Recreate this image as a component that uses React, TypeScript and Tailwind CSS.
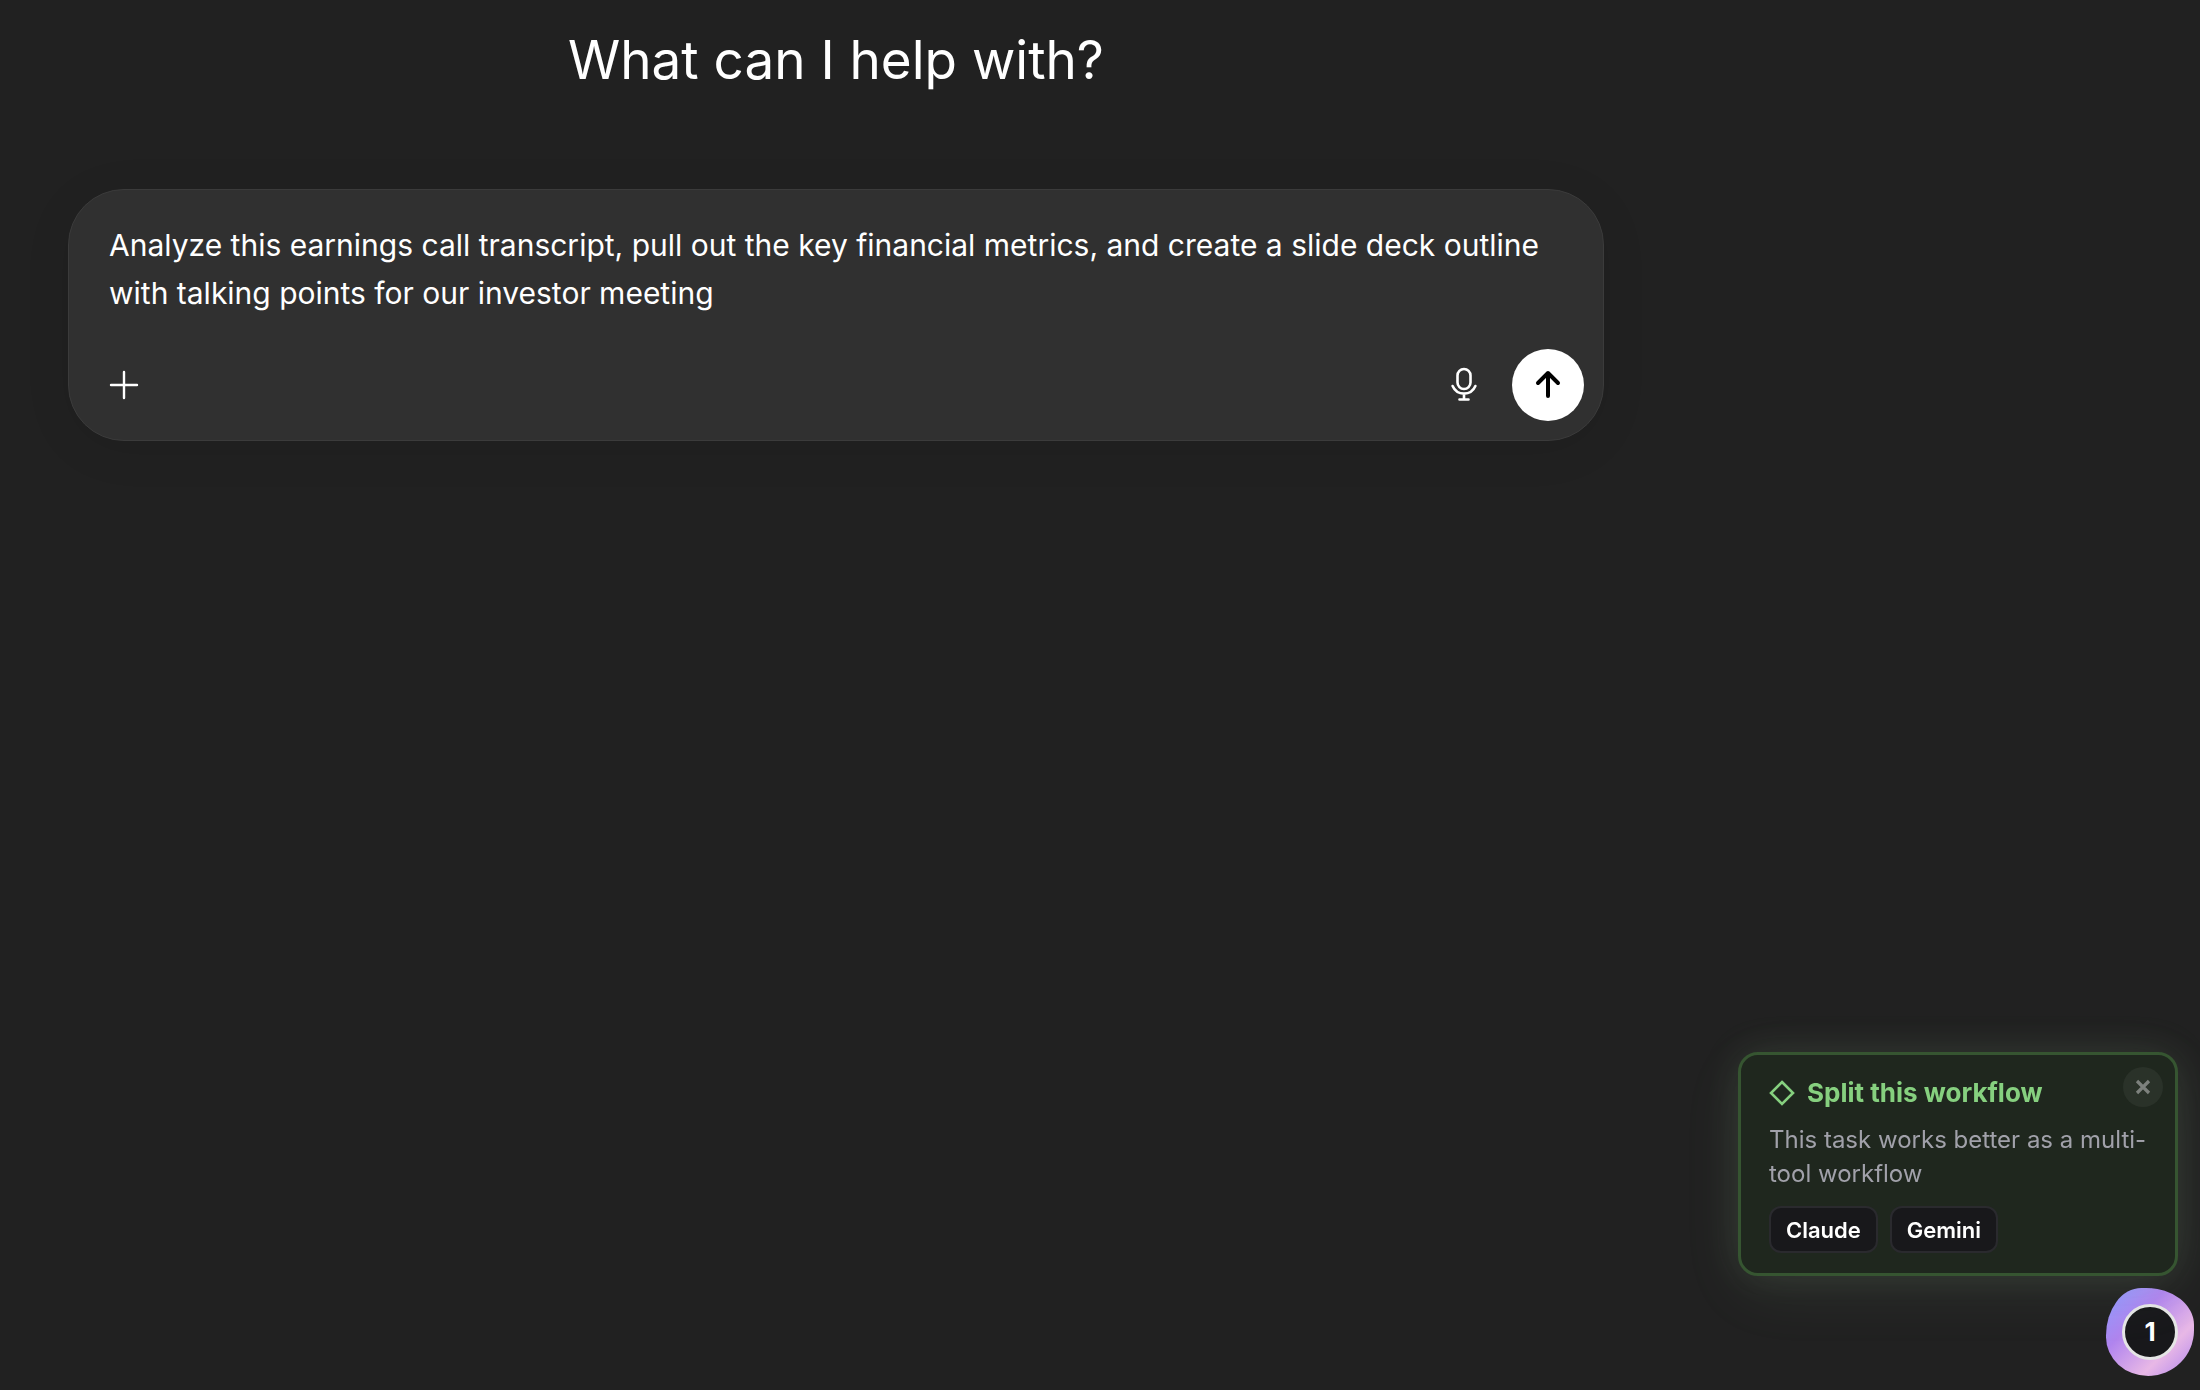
import { useState } from "react"

const tools = ["Claude", "Gemini"]

function PlusIcon() {
  return (
    <svg className="size-[30px]" viewBox="0 0 30 30" fill="none" stroke="currentColor" strokeWidth="2.4" strokeLinecap="round" aria-hidden="true">
      <path d="M15 2v26M2 15h26" />
    </svg>
  )
}

function MicIcon() {
  return (
    <svg className="h-9 w-7" viewBox="0 0 28 36" fill="none" stroke="currentColor" strokeWidth="2.6" strokeLinecap="round" aria-hidden="true">
      <rect x="7.5" y="2" width="13" height="20" rx="6.5" />
      <path d="M2.6 19C4.8 24 9 26.6 14 26.6S23.200 24 25.400 19M14 26.600V32.500M9.500 32.500h9" />
    </svg>
  )
}

function ArrowUpIcon() {
  return (
    <svg className="h-8 w-7" viewBox="0 0 28 32" fill="none" stroke="currentColor" strokeWidth="4" strokeLinecap="round" strokeLinejoin="round" aria-hidden="true">
      <path d="M14 27V4M4 14L14 4l10 10" />
    </svg>
  )
}

function Composer() {
  const [prompt, setPrompt] = useState(
    "Analyze this earnings call transcript, pull out the key financial metrics, and create a slide deck outline with talking points for our investor meeting"
  )

  return (
    <form
      onSubmit={(e) => e.preventDefault()}
      className="w-full rounded-[56px] border border-[#3b3b3b] bg-[#303030] pt-[31px] pr-[19px] pb-[19px] pl-10 shadow-[0_8px_48px_rgba(0,0,0,0.08)]"
    >
      <textarea
        aria-label="Prompt"
        rows={2}
        value={prompt}
        onChange={(e) => setPrompt(e.target.value)}
        className="block w-full resize-none overflow-hidden bg-transparent text-[30px] leading-[48px] text-white outline-none"
      />
      <div className="mt-8 flex items-center justify-between">
        <button type="button" aria-label="Add files" className="text-white">
          <PlusIcon />
        </button>
        <div className="flex items-center gap-[34px]">
          <button type="button" aria-label="Dictate" className="text-white">
            <MicIcon />
          </button>
          <button type="submit" aria-label="Send prompt" className="flex size-[72px] items-center justify-center rounded-full bg-white text-black">
            <ArrowUpIcon />
          </button>
        </div>
      </div>
    </form>
  )
}

function WorkflowCard({ onClose }: { onClose: () => void }) {
  return (
    <section className="relative mr-4 w-[440px] rounded-[20px] border-3 border-[#365531] bg-[#1f271e] px-7 py-5 shadow-[0_16px_64px_rgba(170,210,165,0.07),0_0_40px_rgba(170,210,165,0.12)]">
      <button
        type="button"
        aria-label="Dismiss"
        onClick={onClose}
        className="absolute top-3 right-3 flex size-10 items-center justify-center rounded-full bg-[#2a3229] text-[#7d817d]"
      >
        <svg className="size-4" viewBox="0 0 16 16" fill="none" stroke="currentColor" strokeWidth="3.2" aria-hidden="true">
          <path d="M2 2l12 12M14 2L2 14" />
        </svg>
      </button>
      <h2 className="flex items-center gap-3 text-[26px] leading-9 font-bold text-[#86d07f]">
        <svg className="size-[26px]" viewBox="0 0 26 26" fill="none" stroke="currentColor" strokeWidth="2.6" aria-hidden="true">
          <path d="M13 2l11 11-11 11L2 13z" />
        </svg>
        Split this workflow
      </h2>
      <p className="mt-3 text-2xl leading-[34px] text-[#a1a1aa]">This task works better as a multi-tool workflow</p>
      <div className="mt-[15px] flex gap-3">
        {tools.map((tool) => (
          <button
            key={tool}
            type="button"
            className="h-[47px] rounded-xl border-2 border-[#2a2a2e] bg-[#18181b] px-[15px] text-[22px] leading-7 font-semibold text-white"
          >
            {tool}
          </button>
        ))}
      </div>
    </section>
  )
}

export default function App() {
  const [open, setOpen] = useState(true)

  return (
    <div className="min-h-screen bg-[#212121] font-['Inter',sans-serif] text-white">
      <main className="mr-[596px] ml-[68px] flex flex-col items-center pt-6">
        <h1 className="mb-[93px] text-[53px] leading-[72px] font-normal">What can I help with?</h1>
        <Composer />
      </main>

      <aside className="fixed right-[6px] bottom-[14px] flex flex-col items-end gap-3">
        {open && <WorkflowCard onClose={() => setOpen(false)} />}
        <button
          type="button"
          aria-label="1 suggestion"
          onClick={() => setOpen(!open)}
          className="flex size-[88px] items-center justify-center rounded-[40%_54%_52%_48%/54%_42%_52%_44%] bg-[linear-gradient(135deg,#8b9cff_0%,#b084ee_35%,#e8b8e6_70%,#b084ee_100%)]"
        >
          <span className="flex size-14 items-center justify-center rounded-full border-3 border-[#e5e5e5] bg-[#18181b] text-[26px] leading-8 font-bold text-white">
            1
          </span>
        </button>
      </aside>
    </div>
  )
}
